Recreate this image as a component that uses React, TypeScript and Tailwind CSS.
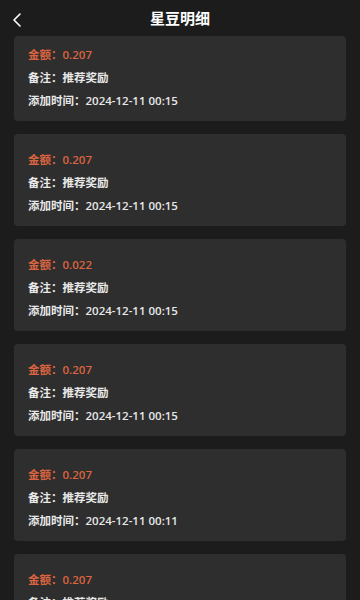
import { ChevronLeft } from "lucide-react";

const records = [
  { amount: "0.207", remark: "推荐奖励", time: "2024-12-11 00:15" },
  { amount: "0.207", remark: "推荐奖励", time: "2024-12-11 00:15" },
  { amount: "0.022", remark: "推荐奖励", time: "2024-12-11 00:15" },
  { amount: "0.207", remark: "推荐奖励", time: "2024-12-11 00:15" },
  { amount: "0.207", remark: "推荐奖励", time: "2024-12-11 00:11" },
  { amount: "0.207", remark: "推荐奖励", time: "2024-12-11 00:11" },
];

export default function App() {
  return (
    <div
      className="w-[360px] h-[600px] overflow-hidden bg-[#1c1c1c] text-[#e8e8e8]"
      style={{ fontFamily: '"Open Sans", "Noto Sans CJK SC", sans-serif' }}
    >
      {/* Header */}
      <div className="relative h-[36px] flex items-center justify-center">
        <ChevronLeft className="absolute left-[5px] top-[8px] w-[24px] h-[24px] text-white" strokeWidth={1.6} />
        <h1 className="text-[15px] font-bold text-white leading-none">星豆明细</h1>
      </div>

      {/* List */}
      <div className="flex flex-col gap-[13px] px-[14px]">
        {records.map((r, i) => (
          <div
            key={i}
            className={`bg-[#2e2e2e] rounded-[4px] pl-[14px] pb-[13px] flex flex-col gap-[8px] text-[11.5px] leading-[15px] font-semibold ${
              i === 0 ? "pt-[11px]" : "pt-[18px]"
            }`}
          >
            <p className="text-[#dc6440]">金额：{r.amount}</p>
            <p>备注：{r.remark}</p>
            <p>添加时间：{r.time}</p>
          </div>
        ))}
      </div>
    </div>
  );
}
